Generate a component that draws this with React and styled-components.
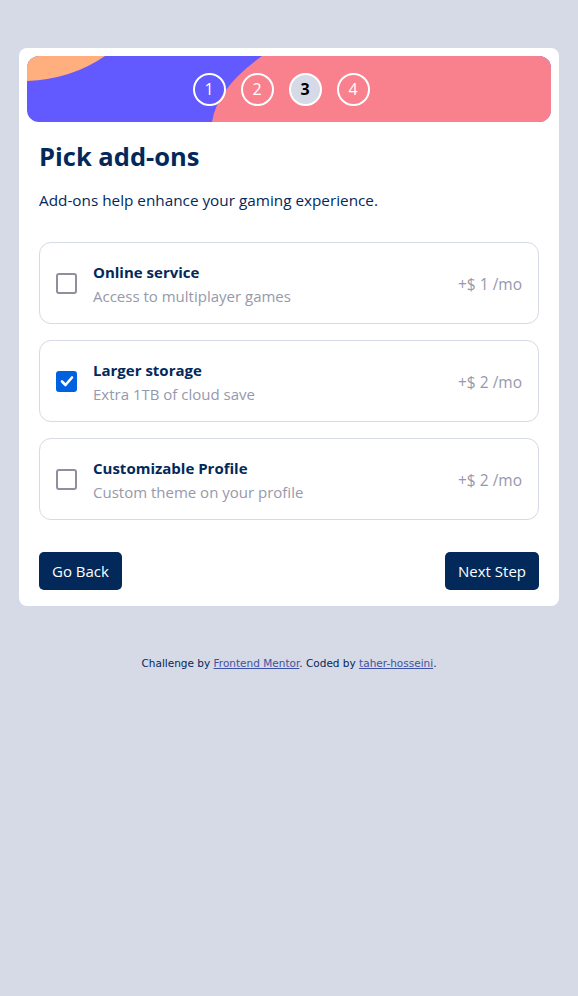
import React from "react";
import styled, { createGlobalStyle } from "styled-components";

const Global = createGlobalStyle`
  * { box-sizing: border-box; }
  body {
    margin: 0;
    background: #d6d9e6;
    font-family: "Open Sans", "Noto Sans", sans-serif;
  }
`;

const Page = styled.div`
  padding: 48px 19px 0;
  display: flex;
  flex-direction: column;
  align-items: stretch;
`;

const Card = styled.main`
  background: #fff;
  border-radius: 8px;
  padding: 8px 8px 16px;
  display: flex;
  flex-direction: column;
`;

const Banner = styled.header`
  position: relative;
  height: 66px;
  border-radius: 12px;
  overflow: hidden;
  background: #6259ff;
  display: flex;
  align-items: center;
  justify-content: center;
`;

const BannerArt = styled.svg`
  position: absolute;
  inset: 0;
  width: 100%;
  height: 100%;
`;

const Steps = styled.ol`
  position: relative;
  list-style: none;
  margin: 0 16px 0 0;
  padding: 0;
  display: flex;
  gap: 15px;
`;

const Step = styled.li`
  width: 33px;
  height: 33px;
  border-radius: 50%;
  border: 2px solid #fff;
  display: flex;
  align-items: center;
  justify-content: center;
  font-size: 16px;
  font-weight: ${(p) => (p.$active ? 700 : 400)};
  color: ${(p) => (p.$active ? "#000" : "#fff")};
  background: ${(p) => (p.$active ? "#d6d9e6" : "transparent")};
`;

const Body = styled.section`
  padding: 0 12px;
  display: flex;
  flex-direction: column;
`;

const Title = styled.h1`
  margin: 18px 0 0;
  font-size: 25.5px;
  line-height: 32px;
  font-weight: 700;
  color: #02295a;
`;

const Lead = styled.p`
  margin: 16px 0 0;
  font-size: 15.3px;
  line-height: 24px;
  color: #02295a;
`;

const List = styled.div`
  margin-top: 30px;
  display: flex;
  flex-direction: column;
  gap: 16px;
`;

const Addon = styled.label`
  height: 82px;
  border: 1px solid #d6d9e6;
  border-radius: 12px;
  padding: 0 16px;
  display: flex;
  align-items: center;
  gap: 16px;
`;

const Box = styled.span`
  flex: none;
  width: 21px;
  height: 21px;
  border-radius: 3px;
  border: ${(p) => (p.$checked ? "none" : "2px solid #8f8f9d")};
  background: ${(p) => (p.$checked ? "#0061e0" : "#fff")};
  display: flex;
  align-items: center;
  justify-content: center;
`;

const Info = styled.div`
  flex: 1;
  display: flex;
  flex-direction: column;
  gap: 2px;
  padding-top: 1px;
`;

const Name = styled.span`
  font-size: 15px;
  line-height: 22px;
  font-weight: 700;
  color: #02295a;
`;

const Desc = styled.span`
  font-size: 15px;
  line-height: 22px;
  color: #9699ab;
`;

const Price = styled.span`
  font-size: 15.5px;
  color: #9699ab;
  margin-top: 2px;
`;

const Actions = styled.div`
  margin-top: 32px;
  display: flex;
  justify-content: space-between;
`;

const Button = styled.button`
  height: 38px;
  padding: 0 13px;
  border: none;
  border-radius: 5px;
  background: #02295a;
  color: #fff;
  font-family: inherit;
  font-size: 15px;
`;

const Footer = styled.footer`
  margin-top: 51px;
  text-align: center;
  font-family: "DejaVu Sans", sans-serif;
  font-size: 10.5px;
  color: #02295a;
  a { color: #3e52a3; }
`;

const addons = [
  { name: "Online service", desc: "Access to multiplayer games", price: 1, checked: false },
  { name: "Larger storage", desc: "Extra 1TB of cloud save", price: 2, checked: true },
  { name: "Customizable Profile", desc: "Custom theme on your profile", price: 2, checked: false },
];

export default function App() {
  return (
    <>
      <Global />
      <Page>
        <Card>
          <Banner>
            <BannerArt viewBox="0 0 524 66" preserveAspectRatio="none">
              <path d="M0 0 H78 Q45 23 0 25 Z" fill="#ffaf7e" />
              <path d="M235 0 Q190 32 185 66 H524 V0 Z" fill="#f9818e" />
            </BannerArt>
            <Steps>
              {[1, 2, 3, 4].map((n) => (
                <Step key={n} $active={n === 3}>{n}</Step>
              ))}
            </Steps>
          </Banner>
          <Body>
            <Title>Pick add-ons</Title>
            <Lead>Add-ons help enhance your gaming experience.</Lead>
            <List>
              {addons.map((a) => (
                <Addon key={a.name}>
                  <Box $checked={a.checked}>
                    {a.checked && (
                      <svg width="14" height="12" viewBox="0 0 14 12">
                        <path d="M2 6.5 L5.5 10 L12 2.5" fill="none" stroke="#fff" strokeWidth="2.6" strokeLinecap="round" strokeLinejoin="round" />
                      </svg>
                    )}
                  </Box>
                  <Info>
                    <Name>{a.name}</Name>
                    <Desc>{a.desc}</Desc>
                  </Info>
                  <Price>+$ {a.price} /mo</Price>
                </Addon>
              ))}
            </List>
            <Actions>
              <Button>Go Back</Button>
              <Button>Next Step</Button>
            </Actions>
          </Body>
        </Card>
        <Footer>
          Challenge by <a href="#">Frontend Mentor</a>. Coded by <a href="#">taher-hosseini</a>.
        </Footer>
      </Page>
    </>
  );
}
